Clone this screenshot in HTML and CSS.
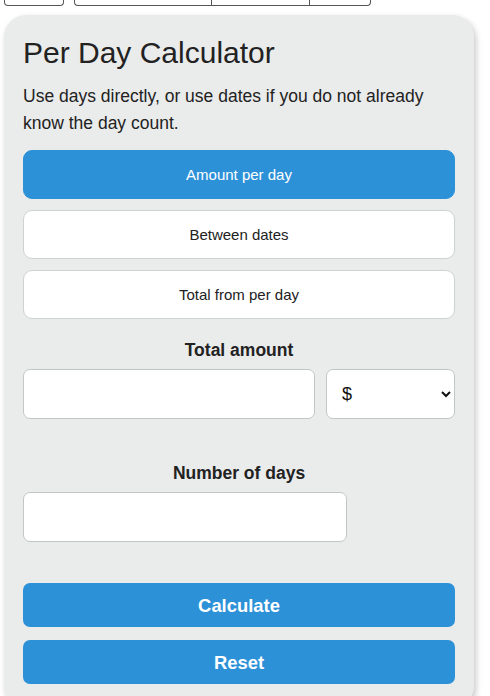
FILE: index.html
```html
<!DOCTYPE html>
<html lang="en">
<head>
<meta charset="utf-8">
<title>Per Day Calculator</title>
<link rel="stylesheet" href="styles.css">
</head>
<body>
<div class="page">
  <nav class="topnav">
    <span class="navbox nav-a"></span>
    <span class="navgroup">
      <span class="navbox nav-b"></span>
      <span class="navbox nav-c"></span>
      <span class="navbox nav-d"></span>
    </span>
  </nav>
  <main class="card">
    <h1 class="title">Per Day Calculator</h1>
    <p class="intro">Use days directly, or use dates if you do not already know the day count.</p>
    <div class="modes">
      <button class="mode active" type="button">Amount per day</button>
      <button class="mode" type="button">Between dates</button>
      <button class="mode" type="button">Total from per day</button>
    </div>
    <div class="field">
      <label class="label" for="total">Total amount</label>
      <div class="row">
        <input id="total" class="input grow" type="text">
        <select class="input currency">
          <option>$</option>
        </select>
      </div>
    </div>
    <div class="field days">
      <label class="label" for="days">Number of days</label>
      <input id="days" class="input short" type="text">
    </div>
    <div class="actions">
      <button class="action" type="button">Calculate</button>
      <button class="action" type="button">Reset</button>
    </div>
  </main>
</div>
</body>
</html>
```
FILE: styles.css
```css
html, body {
  margin: 0;
  padding: 0;
  background: #ffffff;
  font-family: "Liberation Sans", Arial, sans-serif;
  color: #222;
}
.page {
  padding: 0 16px 0 4px;
}
.topnav {
  display: flex;
  gap: 10px;
  height: 26px;
  margin-top: -20px;
  margin-bottom: 9px;
}
.navbox {
  display: block;
  height: 100%;
  box-sizing: border-box;
  border: 1px solid #555;
  border-top: none;
}
.nav-a {
  width: 60px;
  border-radius: 0 0 4px 4px;
}
.navgroup {
  display: flex;
  height: 100%;
}
.nav-b { width: 137px; border-radius: 0 0 0 4px; border-right: none; }
.nav-c { width: 98px; border-right: none; }
.nav-d { width: 62px; border-radius: 0 0 4px 0; }
.card {
  display: block;
  background: #eaebeb;
  border-radius: 22px;
  padding: 20px 19px 24px;
  box-shadow: 2px 3px 6px rgba(0, 0, 0, 0.22);
}
.title {
  margin: 0;
  font-size: 30px;
  font-weight: normal;
  line-height: 36px;
  color: #222;
}
.intro {
  margin: 12px 0 13px;
  font-size: 17.5px;
  line-height: 27px;
  color: #222;
}
.modes {
  display: flex;
  flex-direction: column;
  gap: 11px;
}
.mode {
  height: 49px;
  border: 1px solid #cfd2d4;
  border-radius: 9px;
  background: #fff;
  font-family: "Liberation Sans", Arial, sans-serif;
  font-size: 15px;
  color: #222;
}
.mode.active {
  background: #2d91d8;
  border-color: #2d91d8;
  color: #fff;
}
.field {
  margin-top: 21px;
}
.label {
  display: block;
  text-align: center;
  font-weight: bold;
  font-size: 17.5px;
  line-height: 20px;
  margin-bottom: 9px;
  color: #222;
}
.row {
  display: flex;
  gap: 11px;
}
.input {
  height: 50px;
  box-sizing: border-box;
  border: 1px solid #c3c6c8;
  border-radius: 7px;
  background: #fff;
  font-family: "Liberation Sans", Arial, sans-serif;
  font-size: 18px;
  color: #111;
}
.grow {
  flex: 1;
  min-width: 0;
}
.currency {
  width: 129px;
  padding: 0 8px 0 11px;
}
.days {
  margin-top: 44px;
}
.short {
  width: 75%;
  display: block;
}
.actions {
  display: flex;
  flex-direction: column;
  gap: 13px;
  margin-top: 41px;
}
.action {
  height: 44px;
  padding-top: 3px;
  border: none;
  border-radius: 7px;
  background: #2d91d8;
  color: #fff;
  font-family: "Liberation Sans", Arial, sans-serif;
  font-weight: bold;
  font-size: 18.4px;
}
```
